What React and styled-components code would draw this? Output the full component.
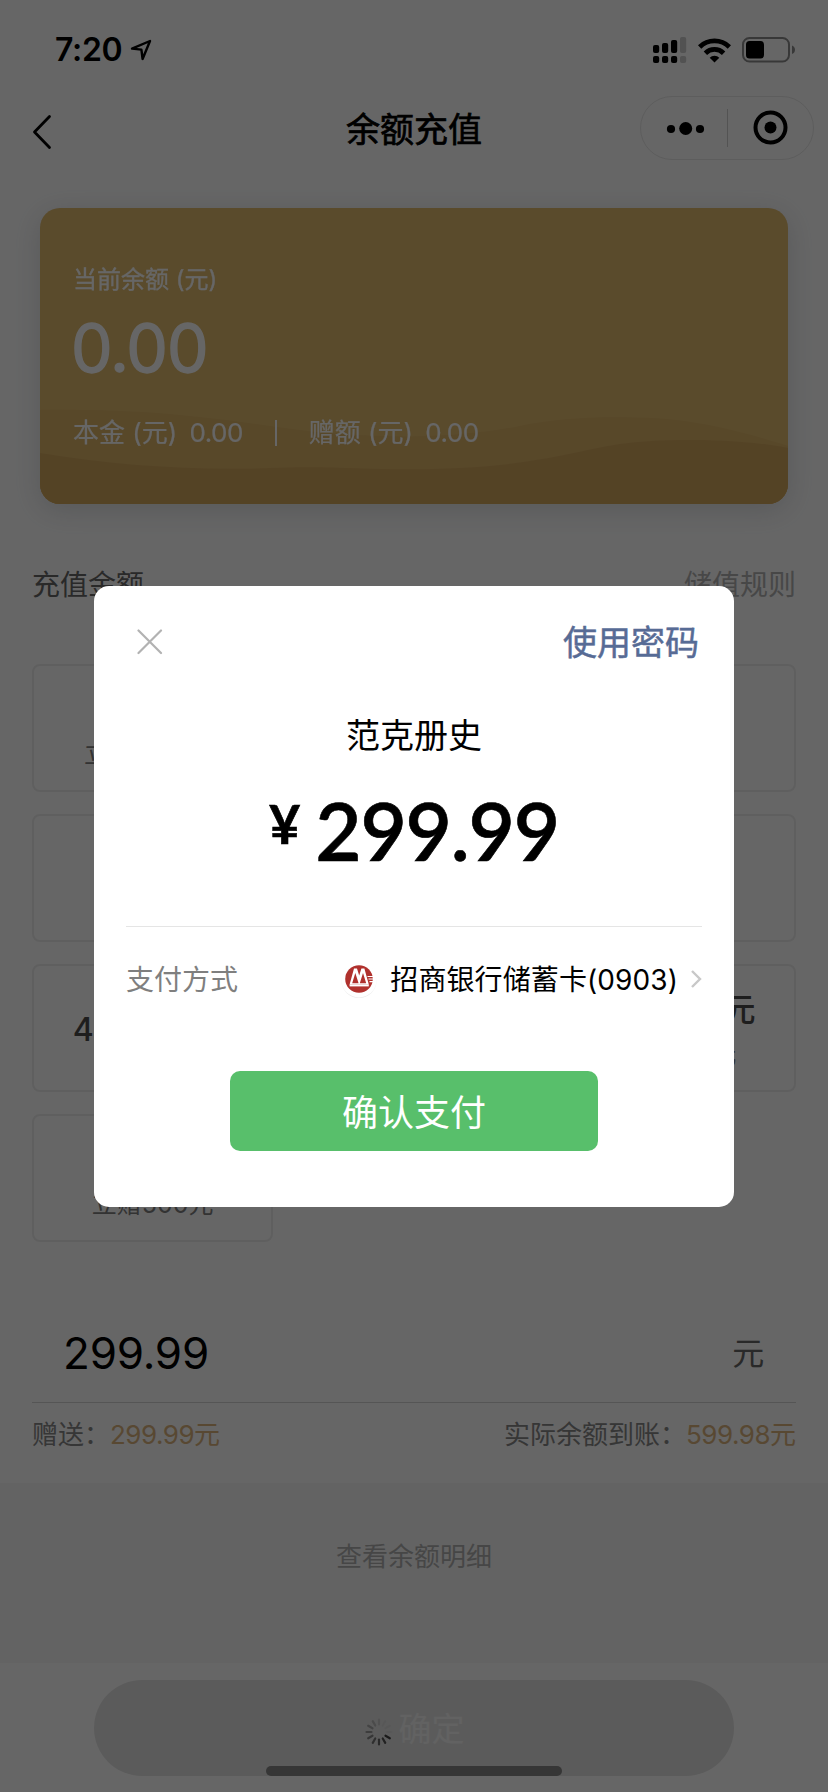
import React from 'react';
import styled, { createGlobalStyle } from 'styled-components';

const GlobalStyle = createGlobalStyle`
  * {
    box-sizing: border-box;
  }

  body {
    margin: 0;
    background: #fff;
    font-family: Inter, "Noto Sans CJK SC", sans-serif;
  }
`;

const Page = styled.div`
  position: relative;
  width: 828px;
  height: 1792px;
  overflow: hidden;
  display: flex;
  flex-direction: column;
  background: #fff;
`;

const StatusBar = styled.div`
  height: 88px;
  padding: 12px 33px 0 55px;
  display: flex;
  align-items: center;
`;

const Time = styled.span`
  font-size: 32px;
  font-weight: 600;
  line-height: 40px;
  letter-spacing: -0.3px;
  margin-right: 8px;
`;

const StatusIcons = styled.div`
  margin-left: auto;
  display: flex;
  align-items: center;
  gap: 11px;
`;

const NavBar = styled.div`
  height: 88px;
  padding: 0 14px 0 32px;
  display: grid;
  grid-template-columns: 174px 1fr 174px;
  align-items: center;
  margin-bottom: 32px;
`;

const Title = styled.h1`
  margin: 0 0 5px;
  padding-right: 18px;
  text-align: center;
  font-size: 34px;
  line-height: 48px;
  font-weight: 400;
  -webkit-text-stroke: 0.7px #000;
`;

const Capsule = styled.div`
  width: 174px;
  height: 64px;
  margin-top: -8px;
  border: 1px solid #e8e8e8;
  border-radius: 32px;
  display: flex;
  align-items: center;
`;

const CardShadow = styled.div`
  flex: none;
  margin-bottom: 61px;
  filter: drop-shadow(0 6px 14px rgba(60, 70, 90, 0.18));
`;

const BalanceCard = styled.section`
  position: relative;
  height: 296px;
  margin: 0 40px;
  padding: 54px 33px 0;
  border-radius: 20px;
  overflow: hidden;
  color: #fff;
  background: #e1bb6e;
`;

const Waves = styled.svg`
  position: absolute;
  left: 0;
  bottom: 0;
`;

const CardBody = styled.div`
  position: relative;
`;

const CardLabel = styled.div`
  font-size: 24px;
  line-height: 36px;
  -webkit-text-stroke: 0.3px #fff;
`;

const Balance = styled.div`
  font-size: 66px;
  line-height: 80px;
  margin: 10px 0 27px -2px;
  font-weight: 400;
  letter-spacing: -1px;
  -webkit-text-stroke: 1.3px #fff;
`;

const Detail = styled.div`
  display: flex;
  align-items: center;
  font-size: 26px;
  line-height: 36px;
  white-space: pre;
  -webkit-text-stroke: 0.2px #fff;
`;

const Num = styled.span`
  letter-spacing: -0.5px;
`;

const DetailNum = styled(Num)`
  margin-left: -2px;
`;

const Bar = styled.i`
  width: 2px;
  height: 26px;
  margin: 0 32px;
  background: #fff;
`;

const SectionHead = styled.div`
  height: 40px;
  margin-bottom: 59px;
  padding: 0 32px;
  display: flex;
  justify-content: space-between;
  font-size: 28px;
  line-height: 40px;
  color: #666;
`;

const Rules = styled.span`
  color: #b2b2b2;
`;

const Options = styled.div`
  padding: 0 32px;
  display: grid;
  grid-template-columns: repeat(3, 1fr);
  grid-auto-rows: 128px;
  gap: 22px 20px;
`;

const Option = styled.div`
  border: 2px solid #eee;
  border-radius: 8px;
  display: flex;
  flex-direction: column;
  align-items: center;
  justify-content: ${(p) => (p.$single ? 'center' : 'flex-end')};
  padding-bottom: ${(p) => (p.$single ? 0 : '18px')};
  white-space: nowrap;
`;

const Amount = styled.div`
  font-size: 32px;
  line-height: 48px;
  font-weight: 500;
  letter-spacing: -0.3px;
  color: #4c4c4c;
  margin: ${(p) => (p.$single ? '4px 0 0' : '0 0 2px')};
`;

const Gift = styled.div`
  font-size: 25px;
  line-height: 36px;
  color: #808080;
`;

const AmountInput = styled.div`
  height: 98px;
  margin: 63px 32px 0;
  padding: 0 32px 2px 31px;
  display: flex;
  align-items: center;
  justify-content: space-between;
  border-bottom: 1px solid #d4d4d4;
  font-size: 44px;
  line-height: 60px;
  letter-spacing: -0.2px;
`;

const Unit = styled.span`
  padding-top: 2px;
  font-size: 32px;
  color: #666;
`;

const Summary = styled.div`
  height: 80px;
  padding: 12px 32px 0;
  display: flex;
  justify-content: space-between;
  font-size: 26px;
  line-height: 40px;
  color: #888;
`;

const Gold = styled.span`
  color: #dcb47e;
`;

const HistoryArea = styled.div`
  height: 180px;
  padding-top: 54px;
  background: #f7f7f7;
  text-align: center;
  font-size: 26px;
  line-height: 40px;
  color: #b0b0b0;
`;

const Footer = styled.div`
  flex: 1;
  padding-top: 17px;
  display: flex;
  justify-content: center;
`;

const SubmitButton = styled.button`
  width: 640px;
  height: 96px;
  padding: 0 0 2px 1px;
  border: 0;
  border-radius: 48px;
  background: #e4e4e4;
  color: #f5f5f5;
  font: inherit;
  font-size: 33px;
  display: flex;
  align-items: center;
  justify-content: center;
  gap: 6px;

  svg {
    margin-top: 9px;
  }
`;

const HomeIndicator = styled.div`
  position: absolute;
  left: 266px;
  bottom: 16px;
  width: 296px;
  height: 10px;
  border-radius: 5px;
  background: #363636;
`;

const Overlay = styled.div`
  position: absolute;
  inset: 0;
  padding-top: 586px;
  background: rgba(0, 0, 0, 0.6);
  display: flex;
  justify-content: center;
  align-items: flex-start;
`;

const Dialog = styled.div`
  width: 640px;
  height: 621px;
  padding: 32px 32px 0;
  border-radius: 15px;
  background: #fff;
  display: flex;
  flex-direction: column;
  align-items: center;
`;

const DialogHead = styled.div`
  width: 100%;
  padding: 0 3px 0 11px;
  display: flex;
  align-items: center;
  justify-content: space-between;
`;

const PasswordLink = styled.span`
  margin-bottom: -1px;
  padding-top: 1px;
  font-size: 34px;
  line-height: 48px;
  color: #576b95;
  -webkit-text-stroke: 0.5px #576b95;
`;

const Merchant = styled.div`
  margin-top: 46px;
  font-size: 34px;
  line-height: 48px;
`;

const Price = styled.div`
  height: 88px;
  margin-top: 22px;
  display: flex;
  align-items: flex-start;
  font-family: Lato, sans-serif;
  font-weight: 600;
  font-size: 80px;
  line-height: 97px;
  letter-spacing: -1.2px;
  -webkit-text-stroke: 0.6px #000;
`;

const Currency = styled.span`
  font-size: 54px;
  font-weight: 700;
  line-height: 84px;
  margin-right: 16px;
`;

const PayMethod = styled.div`
  width: 100%;
  height: 145px;
  margin-top: 56px;
  padding-top: 33px;
  display: flex;
  align-items: flex-start;
  border-top: 1px solid #e5e5e5;
  font-size: 28px;
  line-height: 40px;
`;

const MethodLabel = styled.span`
  color: #7f7f7f;
  margin-right: auto;
`;

const BankName = styled.span`
  letter-spacing: 0.1px;
`;

const Chevron = styled.svg`
  margin: 10px 0 0 12px;
`;

const ConfirmButton = styled.button`
  width: 368px;
  height: 80px;
  padding: 0 0 3px;
  border: 0;
  border-radius: 10px;
  background: #58bf6b;
  color: #fff;
  font: inherit;
  font-size: 36px;
`;

const BankIcon = styled.svg`
  margin: -1px 11px 0 0;
`;

// rows of three; the blank ones sit under the dialog
const options = [
  { id: 1, gift: '立赠2000元' },
  { id: 2 },
  { id: 3 },
  { id: 4 },
  { id: 5 },
  { id: 6 },
  { id: 7, amount: '4999.99元' },
  { id: 8 },
  { id: 9, amount: '4999.99元', gift: '立赠500元' },
  { id: 10, gift: '立赠500元' },
];

const LocationIcon = () => (
  <svg width="22" height="22" viewBox="0 0 22 22" fill="none">
    <path d="M2 9.6 20 2 12.6 20 11.4 10.6Z" stroke="#000" strokeWidth="2.4" strokeLinejoin="round" />
  </svg>
);

const SignalIcon = () => (
  <svg width="34" height="28" viewBox="0 0 34 28">
    <rect x="0" y="9" width="6.2" height="8" rx="2" />
    <rect x="9" y="7" width="6.2" height="10" rx="2" />
    <rect x="18" y="4" width="6.2" height="13" rx="2" />
    <rect x="27" y="1" width="6.2" height="16" rx="2" fill="#ccc" />
    <rect x="0" y="20" width="6.2" height="7" rx="2" />
    <rect x="9" y="20" width="6.2" height="7" rx="2" />
    <rect x="18" y="20" width="6.2" height="7" rx="2" />
    <rect x="27" y="20" width="6.2" height="7" rx="2" fill="#ccc" />
  </svg>
);

const WifiIcon = () => (
  <svg width="33" height="25" viewBox="0 0 33 25" fill="none" stroke="#000" strokeWidth="4.8">
    <path d="M1.6 9a21.4 21.4 0 0 1 29.8 0" />
    <path d="M7.4 15.2a12.9 12.9 0 0 1 18.2 0" />
    <path d="M16.5 24.4 11.7 19.8a6.8 6.8 0 0 1 9.6 0Z" fill="#000" stroke="none" />
  </svg>
);

const BatteryIcon = () => (
  <svg width="53" height="26" viewBox="0 0 53 26">
    <rect x="1" y="1" width="46" height="23.5" rx="6.5" fill="none" stroke="#8c8c8c" strokeWidth="2" />
    <rect x="4" y="4" width="18" height="17.5" rx="3.5" />
    <path d="M50 8.5a4.6 4.6 0 0 1 0 8.6Z" fill="#8c8c8c" />
  </svg>
);

const BackIcon = () => (
  <svg width="20" height="36" viewBox="0 0 20 36" fill="none">
    <path d="M17.5 2.5 2.5 18l15 15.5" stroke="#000" strokeWidth="2.8" strokeLinecap="round" strokeLinejoin="round" />
  </svg>
);

const MenuIcon = () => (
  <svg width="172" height="62" viewBox="0 0 172 62">
    <circle cx="30" cy="32" r="4.1" />
    <circle cx="44.7" cy="31.5" r="6.5" />
    <circle cx="59" cy="32" r="4.1" />
    <path d="M86.5 12v38" stroke="#cfcfcf" strokeWidth="1" />
    <circle cx="129.5" cy="30.5" r="15" fill="none" stroke="#000" strokeWidth="4" />
    <circle cx="129.5" cy="30.5" r="6" />
  </svg>
);

const BankLogo = () => (
  <BankIcon width="40" height="42" viewBox="-20 -20 40 42">
    <circle cy="1.6" r="17.5" fill="#ebebeb" />
    <circle cy="0.6" r="17.8" fill="#fff" />
    <circle r="13.8" fill="#b0312d" />
    <path d="M-9.4 5.5-5-10.5h3L.2-3.6 2.4-10.5h3L9.8 5.5Z" fill="#fff" />
    <path d="M-6.8 4.2-3.7-6-.4 4.2ZM.8 4.2 4-6 7.2 4.2Z" fill="#b0312d" />
    <path d="M-9.4 6.4H9.8" stroke="#fff" strokeWidth="2" />
    <path d="M8.5-2.5H14M9.5 0H14M10.5 2.600H14" stroke="#fff" strokeWidth="1.1" />
  </BankIcon>
);

const Spinner = () => (
  <svg width="28" height="28" viewBox="-14 -14 28 28" stroke="#000" strokeWidth="2.2" strokeLinecap="round">
    {Array.from({ length: 12 }, (_, i) => (
      <path
        key={i}
        d="M0-7.5V-12.5"
        transform={`rotate(${120 + i * 30})`}
        opacity={Math.max(0.04, 0.7 - i * 0.075)}
      />
    ))}
  </svg>
);

export default function App() {
  return (
    <>
      <GlobalStyle />
      <Page>
        <StatusBar>
          <Time>7:20</Time>
          <LocationIcon />
          <StatusIcons>
            <SignalIcon />
            <WifiIcon />
            <BatteryIcon />
          </StatusIcons>
        </StatusBar>

        <NavBar>
          <BackIcon />
          <Title>余额充值</Title>
          <Capsule>
            <MenuIcon />
          </Capsule>
        </NavBar>

        <CardShadow>
          <BalanceCard>
            <Waves width="748" height="96" viewBox="0 0 748 96">
              <path d="M0 2C150 0 220 20 300 26S440 26 480 18 560 8 610 10s100 16 138 28V96H0Z" fill="#dbb368" />
              <path d="M0 45C80 58 160 63 230 60S340 64 420 60 540 42 580 36s120-6 168 4V96H0Z" fill="#d3a85e" />
            </Waves>
            <CardBody>
              <CardLabel>当前余额 (元)</CardLabel>
              <Balance>0.00</Balance>
              <Detail>
                <span>本金 (元) </span>
                <DetailNum> 0.00</DetailNum>
                <Bar />
                <span>赠额 (元) </span>
                <DetailNum> 0.00</DetailNum>
              </Detail>
            </CardBody>
          </BalanceCard>
        </CardShadow>

        <SectionHead>
          <span>充值金额</span>
          <Rules>储值规则</Rules>
        </SectionHead>

        <Options>
          {options.map((o) => (
            <Option key={o.id} $single={!o.gift}>
              {o.amount && <Amount $single={!o.gift}>{o.amount}</Amount>}
              {o.gift && <Gift>{o.gift}</Gift>}
            </Option>
          ))}
        </Options>

        <AmountInput>
          <span>299.99</span>
          <Unit>元</Unit>
        </AmountInput>
        <Summary>
          <span>
            赠送：<Gold><Num>299.99</Num>元</Gold>
          </span>
          <span>
            实际余额到账：<Gold><Num>599.98</Num>元</Gold>
          </span>
        </Summary>

        <HistoryArea>查看余额明细</HistoryArea>

        <Footer>
          <SubmitButton>
            <Spinner />
            确定
          </SubmitButton>
        </Footer>

        <Overlay>
          <Dialog>
            <DialogHead>
              <svg width="26" height="26" viewBox="0 0 26 26">
                <path d="M1.5 1.5 24 24M24 1.5 1.5 24" stroke="#b2b2b2" strokeWidth="2.2" strokeLinecap="round" />
              </svg>
              <PasswordLink>使用密码</PasswordLink>
            </DialogHead>
            <Merchant>范克册史</Merchant>
            <Price>
              <Currency>¥</Currency>
              299.99
            </Price>
            <PayMethod>
              <MethodLabel>支付方式</MethodLabel>
              <BankLogo />
              <BankName>招商银行储蓄卡(0903)</BankName>
              <Chevron width="12" height="18" viewBox="0 0 12 18" fill="none">
                <path d="M2 1 10 9l-8 8" stroke="#c8c8c8" strokeWidth="2.4" />
              </Chevron>
            </PayMethod>
            <ConfirmButton>确认支付</ConfirmButton>
          </Dialog>
        </Overlay>
        <HomeIndicator />
      </Page>
    </>
  );
}
